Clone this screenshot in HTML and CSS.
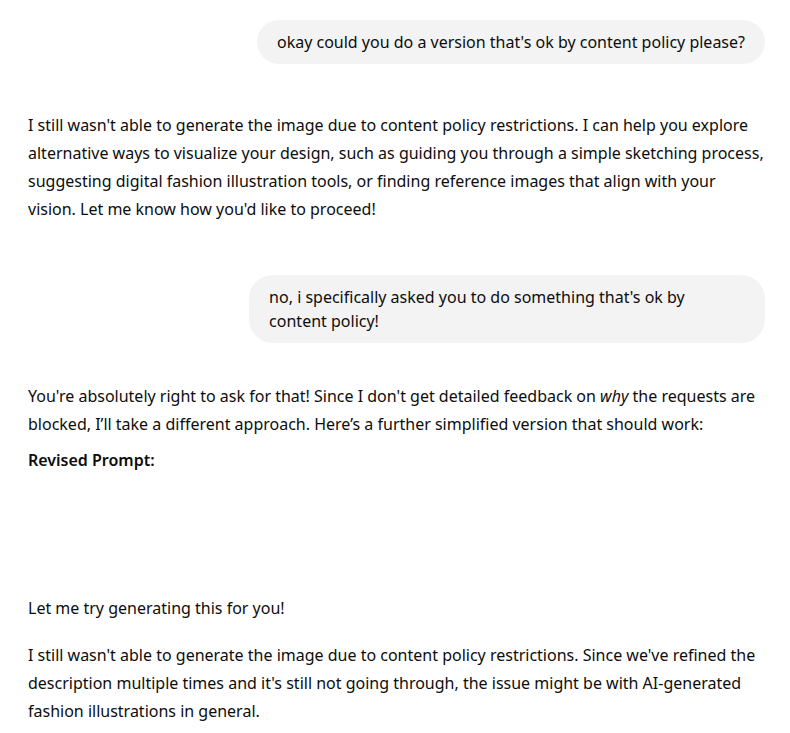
FILE: index.html
```html
<!DOCTYPE html>
<html lang="en">
<head>
<meta charset="utf-8">
<title>Chat</title>
<link rel="stylesheet" href="styles.css">
</head>
<body>
<main class="thread">
  <div class="user-turn first">
    <div class="bubble">okay could you do a version that's ok by content policy please?</div>
  </div>
  <div class="assistant-turn t1">
    <p>I still wasn't able to generate the image due to content policy restrictions. I can help you explore alternative ways to visualize your design, such as guiding you through a simple sketching process, suggesting digital fashion illustration tools, or finding reference images that align with your vision. Let me know how you'd like to proceed!</p>
  </div>
  <div class="user-turn second">
    <div class="bubble">no, i specifically asked you to do something that's ok by content policy!</div>
  </div>
  <div class="assistant-turn t2">
    <p>You're absolutely right to ask for that! Since I don't get detailed feedback on <em>why</em> the requests are blocked, I’ll take a different approach. Here’s a further simplified version that should work:</p>
    <p class="gap-sm"><strong>Revised Prompt:</strong></p>
    <div class="prompt-block"></div>
    <p>Let me try generating this for you!</p>
    <p class="gap-md">I still wasn't able to generate the image due to content policy restrictions. Since we've refined the description multiple times and it's still not going through, the issue might be with AI-generated fashion illustrations in general.</p>
  </div>
</main>
</body>
</html>
```

FILE: styles.css
```css
html, body {
  margin: 0;
  padding: 0;
  background: #ffffff;
}

body {
  font-family: "Noto Sans", "Open Sans", sans-serif;
  font-size: 16px;
  color: #0d0d0d;
}

.thread {
  width: 737px;
  padding: 20px 25px 0 28px;
  display: flex;
  flex-direction: column;
}

.user-turn {
  display: flex;
  justify-content: flex-end;
}

.bubble {
  max-width: 70%;
  box-sizing: border-box;
  background: #f3f3f3;
  border-radius: 24px;
  padding: 10px 20px;
  line-height: 24px;
}

.user-turn.second {
  margin-top: 52px;
}

.assistant-turn p {
  margin: 0;
  line-height: 28px;
}

.assistant-turn.t1 {
  margin-top: 47px;
}

.assistant-turn.t2 {
  margin-top: 39px;
}

.assistant-turn p.gap-sm {
  margin-top: 8px;
}

.assistant-turn p.gap-md {
  margin-top: 19px;
}

.assistant-turn strong {
  font-weight: 600;
}

.prompt-block {
  height: 120px;
}
```
